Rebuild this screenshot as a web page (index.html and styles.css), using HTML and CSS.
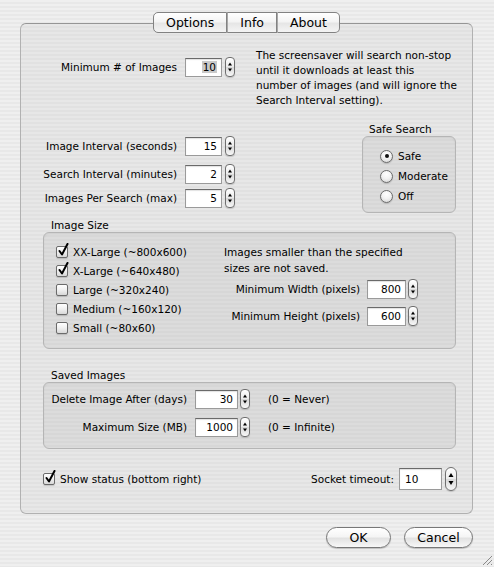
FILE: index.html
```html
<!DOCTYPE html>
<html>
<head>
<meta charset="utf-8">
<link rel="stylesheet" href="styles.css">
</head>
<body>
<div class="window">
  <div class="tabs">
    <div class="tab">Options</div>
    <div class="tab">Info</div>
    <div class="tab">About</div>
  </div>
  <div class="panel">
    <div class="intro">
      <div class="spin-row">
        <span class="lbl lbl-main">Minimum # of Images</span>
        <div class="field w37"><span class="sel">10</span></div>
        <div class="stepper"><svg width="8" height="18" viewBox="0 0 8 18"><polygon points="2,7.5 4,4.5 6,7.5"/><polygon points="2,10.5 4,13.5 6,10.5"/></svg></div>
      </div>
      <p class="desc">The screensaver will search non-stop until it downloads at least this number of images (and will ignore the Search Interval setting).</p>
    </div>

    <div class="timing">
      <div class="timing-rows">
        <div class="spin-row">
          <span class="lbl lbl-main">Image Interval (seconds)</span>
          <div class="field w37">15</div>
          <div class="stepper"><svg width="8" height="18" viewBox="0 0 8 18"><polygon points="2,7.5 4,4.5 6,7.5"/><polygon points="2,10.5 4,13.5 6,10.5"/></svg></div>
        </div>
        <div class="spin-row">
          <span class="lbl lbl-main">Search Interval (minutes)</span>
          <div class="field w37">2</div>
          <div class="stepper"><svg width="8" height="18" viewBox="0 0 8 18"><polygon points="2,7.5 4,4.5 6,7.5"/><polygon points="2,10.5 4,13.5 6,10.5"/></svg></div>
        </div>
        <div class="spin-row">
          <span class="lbl lbl-main">Images Per Search (max)</span>
          <div class="field w37">5</div>
          <div class="stepper"><svg width="8" height="18" viewBox="0 0 8 18"><polygon points="2,7.5 4,4.5 6,7.5"/><polygon points="2,10.5 4,13.5 6,10.5"/></svg></div>
        </div>
      </div>
      <div class="safe">
        <div class="group-title">Safe Search</div>
        <div class="group safe-box">
          <div class="radio-row"><span class="radio on"></span>Safe</div>
          <div class="radio-row"><span class="radio"></span>Moderate</div>
          <div class="radio-row"><span class="radio"></span>Off</div>
        </div>
      </div>
    </div>

    <div class="section size-section">
      <div class="group-title">Image Size</div>
      <div class="group size-box">
        <div class="checks">
          <div class="check-row"><span class="checkbox on"><svg class="tick" width="12" height="14" viewBox="0 0 12 14"><path d="M2.5 8 L5 11.5 L10.5 1"/></svg></span>XX-Large (~800x600)</div>
          <div class="check-row"><span class="checkbox on"><svg class="tick" width="12" height="14" viewBox="0 0 12 14"><path d="M2.5 8 L5 11.5 L10.5 1"/></svg></span>X-Large (~640x480)</div>
          <div class="check-row"><span class="checkbox"></span>Large (~320x240)</div>
          <div class="check-row"><span class="checkbox"></span>Medium (~160x120)</div>
          <div class="check-row"><span class="checkbox"></span>Small (~80x60)</div>
        </div>
        <div class="size-right">
          <p class="desc2">Images smaller than the specified sizes are not saved.</p>
          <div class="spin-row right-row">
            <span class="lbl lbl-px">Minimum Width (pixels)</span>
            <div class="field w39">800</div>
            <div class="stepper"><svg width="8" height="18" viewBox="0 0 8 18"><polygon points="2,7.5 4,4.5 6,7.5"/><polygon points="2,10.5 4,13.5 6,10.5"/></svg></div>
          </div>
          <div class="spin-row right-row">
            <span class="lbl lbl-px">Minimum Height (pixels)</span>
            <div class="field w39">600</div>
            <div class="stepper"><svg width="8" height="18" viewBox="0 0 8 18"><polygon points="2,7.5 4,4.5 6,7.5"/><polygon points="2,10.5 4,13.5 6,10.5"/></svg></div>
          </div>
        </div>
      </div>
    </div>

    <div class="section saved-section">
      <div class="group-title">Saved Images</div>
      <div class="group saved-box">
        <div class="spin-row">
          <span class="lbl lbl-saved">Delete Image After (days)</span>
          <div class="field w43">30</div>
          <div class="stepper"><svg width="8" height="18" viewBox="0 0 8 18"><polygon points="2,7.5 4,4.5 6,7.5"/><polygon points="2,10.5 4,13.5 6,10.5"/></svg></div>
          <span class="note">(0 = Never)</span>
        </div>
        <div class="spin-row">
          <span class="lbl lbl-saved">Maximum Size (MB)</span>
          <div class="field w43">1000</div>
          <div class="stepper"><svg width="8" height="18" viewBox="0 0 8 18"><polygon points="2,7.5 4,4.5 6,7.5"/><polygon points="2,10.5 4,13.5 6,10.5"/></svg></div>
          <span class="note">(0 = Infinite)</span>
        </div>
      </div>
    </div>

    <div class="bottom-row">
      <div class="check-row"><span class="checkbox on"><svg class="tick" width="12" height="14" viewBox="0 0 12 14"><path d="M2.5 8 L5 11.5 L10.5 1"/></svg></span>Show status (bottom right)</div>
      <div class="socket">
        <span class="lbl socket-lbl">Socket timeout:</span>
        <div class="field socket-field">10</div>
        <div class="stepper big"><svg width="10" height="22" viewBox="0 0 10 22"><polygon points="2.5,9 5,5 7.5,9"/><polygon points="2.5,13 5,17 7.5,13"/></svg></div>
      </div>
    </div>
  </div>

  <div class="buttons">
    <div class="btn btn-ok">OK</div>
    <div class="btn btn-cancel">Cancel</div>
  </div>

  <svg class="grip" width="12" height="12" viewBox="0 0 12 12">
    <path d="M11 2 L2 11 M11 6 L6 11 M11 10 L10 11" />
  </svg>
</div>
</body>
</html>
```
FILE: styles.css
```css
html, body {
  margin: 0;
  padding: 0;
}
body {
  font-family: "DejaVu Sans", "Liberation Sans", sans-serif;
  font-size: 10.5px;
  color: #000;
}
.window {
  width: 494px;
  height: 567px;
  box-sizing: border-box;
  padding: 12px 21px 0 20px;
  position: relative;
  overflow: hidden;
  background: repeating-linear-gradient(180deg, #efefef 0 2px, #e8e8e8 2px 4px);
}

/* Tabs */
.tabs {
  display: flex;
  justify-content: center;
  height: 21px;
  position: relative;
  z-index: 1;
}
.tab {
  height: 21px;
  box-sizing: border-box;
  padding: 0 12px;
  line-height: 19px;
  font-size: 12.5px;
  border: 1px solid #828282;
  border-left: 1px solid #a8a8a8;
  background: linear-gradient(180deg, #ffffff 0%, #f4f4f4 45%, #e6e6e6 55%, #f4f4f4 100%);
}
.tab:first-child {
  border-left: 1px solid #828282;
  border-radius: 5px 0 0 5px;
}
.tab:last-child {
  border-radius: 0 5px 5px 0;
}

/* Panel */
.panel {
  margin-top: -10px;
  height: 491px;
  box-sizing: border-box;
  border: 1px solid #b1b1b1;
  border-top-color: #969696;
  border-radius: 6px;
  padding-top: 24px;
  background: repeating-linear-gradient(180deg, #e7e7e7 0 2px, #e1e1e1 2px 4px);
}

.intro {
  display: flex;
  align-items: flex-start;
}
.intro .spin-row {
  margin-top: 9px;
}
.desc {
  margin: 0 0 0 21px;
  width: 201px;
  line-height: 15px;
}

.spin-row {
  display: flex;
  align-items: center;
  height: 20px;
}
.lbl {
  flex: none;
  text-align: right;
  white-space: nowrap;
}
.lbl-main {
  width: 156px;
  margin-right: 8px;
}
.field {
  flex: none;
  height: 19px;
  box-sizing: border-box;
  border: 1px solid #9a9a9a;
  border-top-color: #6a6a6a;
  background: #fff;
  box-shadow: inset 0 1px 1px rgba(0, 0, 0, 0.12);
  text-align: right;
  padding-right: 4px;
  line-height: 17px;
  margin-right: 3px;
}
.w37 { width: 37px; }
.w39 { width: 39px; margin-right: 2px; }
.w43 { width: 43px; margin-right: 2px; }
.sel {
  background: #c9c9c9;
  padding: 0 1px;
}

.stepper {
  flex: none;
  width: 10px;
  height: 20px;
  box-sizing: border-box;
  border: 1px solid #6f6f6f;
  border-radius: 4px;
  background: linear-gradient(180deg, #ffffff 0%, #ececec 48%, #d9d9d9 52%, #f7f7f7 100%);
  display: flex;
  box-shadow: 0 1px 1px rgba(0, 0, 0, 0.15);
}
.stepper svg {
  display: block;
  fill: #000;
}
.stepper.big {
  width: 12px;
  height: 24px;
  border-radius: 6px;
}

/* timing */
.timing {
  display: flex;
  align-items: flex-start;
  margin-top: 14px;
}
.timing-rows {
  padding-top: 14px;
}
.timing-rows .spin-row:nth-child(2) { margin-top: 8px; }
.timing-rows .spin-row:nth-child(3) { margin-top: 4px; }

.safe {
  margin-left: 127px;
}
.group-title {
  height: 14px;
  line-height: 14px;
  padding-left: 7px;
}
.group {
  box-sizing: border-box;
  border: 1px solid #b5b5b5;
  border-radius: 6px;
  background: repeating-linear-gradient(180deg, #dcdcdc 0 2px, #d7d7d7 2px 4px);
  box-shadow: inset 0 1px 2px rgba(0, 0, 0, 0.06);
}
.safe-box {
  width: 94px;
  height: 77px;
  padding: 9px 0 0 17px;
}
.radio-row {
  display: flex;
  align-items: center;
  height: 20px;
}
.radio {
  width: 13px;
  height: 13px;
  box-sizing: border-box;
  border: 1px solid #6b6b6b;
  border-radius: 50%;
  margin-right: 5px;
  background: radial-gradient(circle at 50% 30%, #ffffff 0%, #f3f3f3 45%, #d2d2d2 100%);
  display: flex;
  align-items: center;
  justify-content: center;
  box-shadow: 0 1px 1px rgba(0, 0, 0, 0.15);
}
.radio.on::after {
  content: "";
  width: 4px;
  height: 4px;
  border-radius: 50%;
  background: #111;
}

/* sections */
.section {
  margin-left: 22px;
}
.section .group-title {
  padding-left: 8px;
}
.size-section {
  margin-top: 5px;
}
.size-box {
  width: 413px;
  height: 117px;
  display: flex;
  padding: 9px 0 0 12px;
}
.checks {
  width: 168px;
}
.check-row {
  display: flex;
  align-items: center;
  height: 19px;
  white-space: nowrap;
}
.checkbox {
  flex: none;
  position: relative;
  width: 12px;
  height: 12px;
  box-sizing: border-box;
  border: 1px solid #6b6b6b;
  border-radius: 2px;
  margin-right: 5px;
  background: linear-gradient(180deg, #ffffff 0%, #f0f0f0 50%, #d8d8d8 100%);
  box-shadow: 0 1px 1px rgba(0, 0, 0, 0.15);
}
.tick {
  position: absolute;
  left: 0;
  top: -4px;
  fill: none;
  stroke: #000;
  stroke-width: 2;
  stroke-linecap: round;
  stroke-linejoin: round;
}
.size-right {
  width: 194px;
}
.desc2 {
  margin: 2px 0 0 0;
  line-height: 16px;
}
.right-row {
  justify-content: flex-end;
  margin-top: 3px;
}
.right-row + .right-row {
  margin-top: 7px;
}
.lbl-px {
  margin-right: 7px;
}

.saved-section {
  margin-top: 19px;
}
.saved-box {
  width: 413px;
  height: 67px;
  padding: 6px 0 0 0;
}
.saved-box .spin-row + .spin-row {
  margin-top: 8px;
}
.lbl-saved {
  width: 143px;
  margin-right: 8px;
}
.note {
  margin-left: 18px;
  white-space: nowrap;
}

.bottom-row {
  display: flex;
  align-items: center;
  justify-content: space-between;
  height: 24px;
  margin: 18px 15px 0 22px;
}
.socket {
  display: flex;
  align-items: center;
}
.socket-lbl {
  margin-right: 5px;
}
.socket-field {
  width: 43px;
  height: 22px;
  line-height: 20px;
  text-align: left;
  padding-left: 5px;
  margin-right: 3px;
}

/* buttons */
.buttons {
  display: flex;
  justify-content: flex-end;
  gap: 13px;
  margin-top: 13px;
}
.btn {
  height: 21px;
  box-sizing: border-box;
  border: 1px solid #777;
  border-radius: 11px;
  text-align: center;
  font-size: 12.5px;
  line-height: 19px;
  background: linear-gradient(180deg, #ffffff 0%, #f5f5f5 45%, #e2e2e2 55%, #f8f8f8 100%);
  box-shadow: 0 1px 1px rgba(0, 0, 0, 0.2);
}
.btn-ok { width: 65px; }
.btn-cancel { width: 69px; }

.grip {
  position: absolute;
  right: 1px;
  bottom: 1px;
  fill: none;
  stroke: #8a8a8a;
  stroke-width: 1;
}
```
